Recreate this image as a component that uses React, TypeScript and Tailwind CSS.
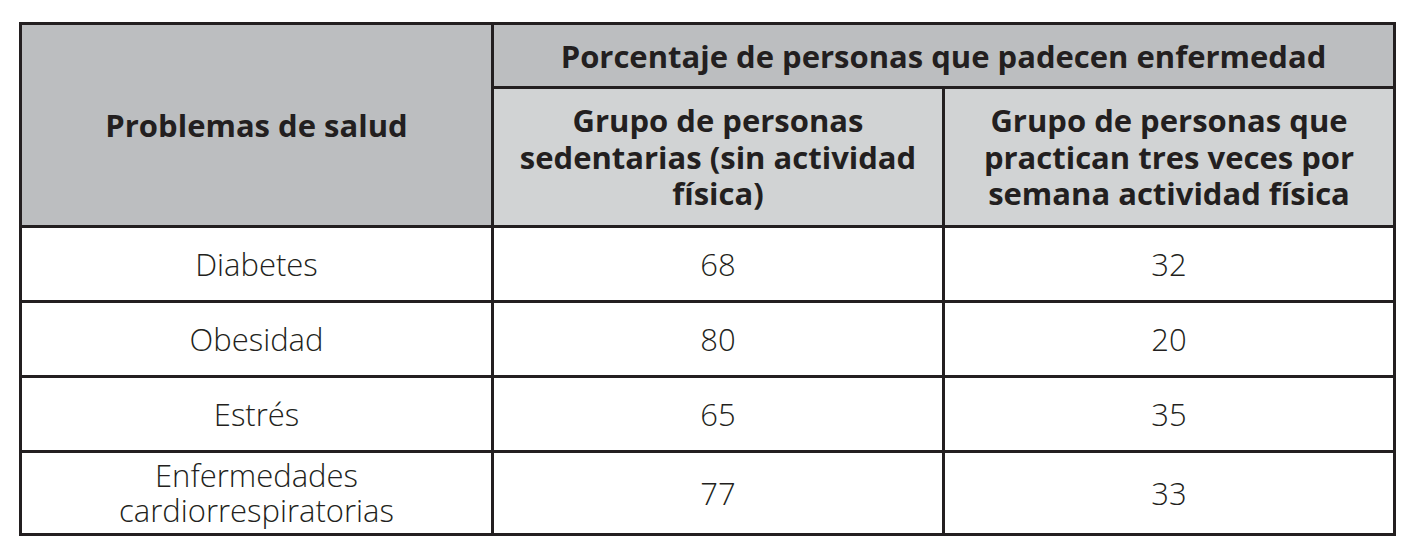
const filas = [
  { problema: ['Diabetes'], sedentarias: '68', activas: '32', alto: 'h-[75px]' },
  { problema: ['Obesidad'], sedentarias: '80', activas: '20', alto: 'h-[75px]' },
  { problema: ['Estrés'], sedentarias: '65', activas: '35', alto: 'h-[75px]' },
  { problema: ['Enfermedades', 'cardiorrespiratorias'], sedentarias: '77', activas: '33', alto: 'h-[83px]' },
];

const App = () => {
  return (
    <div className="min-h-screen bg-white pl-[19px] pt-[22px] font-['Open_Sans',sans-serif] text-[#231f20]">
      <table className="w-[1374px] table-fixed border-collapse border-[3px] border-[#231f20]">
        <colgroup>
          <col className="w-[472px]" />
          <col className="w-[451px]" />
          <col className="w-[451px]" />
        </colgroup>
        <thead>
          <tr className="h-[64px]">
            <th
              rowSpan={2}
              className="border-[3px] border-[#231f20] bg-[#bcbec0] text-[31px] font-bold leading-[36px]"
            >
              Problemas de salud
            </th>
            <th
              colSpan={2}
              className="border-[3px] border-[#231f20] bg-[#bcbec0] text-[31px] font-bold leading-[36px]"
            >
              Porcentaje de personas que padecen enfermedad
            </th>
          </tr>
          <tr className="h-[139px]">
            <th className="border-[3px] border-[#231f20] bg-[#d1d3d4] px-3 text-[31px] font-bold leading-[36.5px]">
              Grupo de personas
              <br />
              sedentarias (sin actividad
              <br />
              física)
            </th>
            <th className="border-[3px] border-[#231f20] bg-[#d1d3d4] px-3 text-[31px] font-bold leading-[36.5px]">
              Grupo de personas que
              <br />
              practican tres veces por
              <br />
              semana actividad física
            </th>
          </tr>
        </thead>
        <tbody>
          {filas.map((fila) => (
            <tr key={fila.problema.join(' ')} className={fila.alto}>
              <td className="border-[3px] border-[#231f20] text-center text-[31px] font-light leading-[35px]">
                {fila.problema.map((linea) => (
                  <div key={linea}>{linea}</div>
                ))}
              </td>
              <td className="border-[3px] border-[#231f20] text-center text-[31px] font-light leading-[35px]">
                {fila.sedentarias}
              </td>
              <td className="border-[3px] border-[#231f20] text-center text-[31px] font-light leading-[35px]">
                {fila.activas}
              </td>
            </tr>
          ))}
        </tbody>
      </table>
    </div>
  );
};

export default App;
